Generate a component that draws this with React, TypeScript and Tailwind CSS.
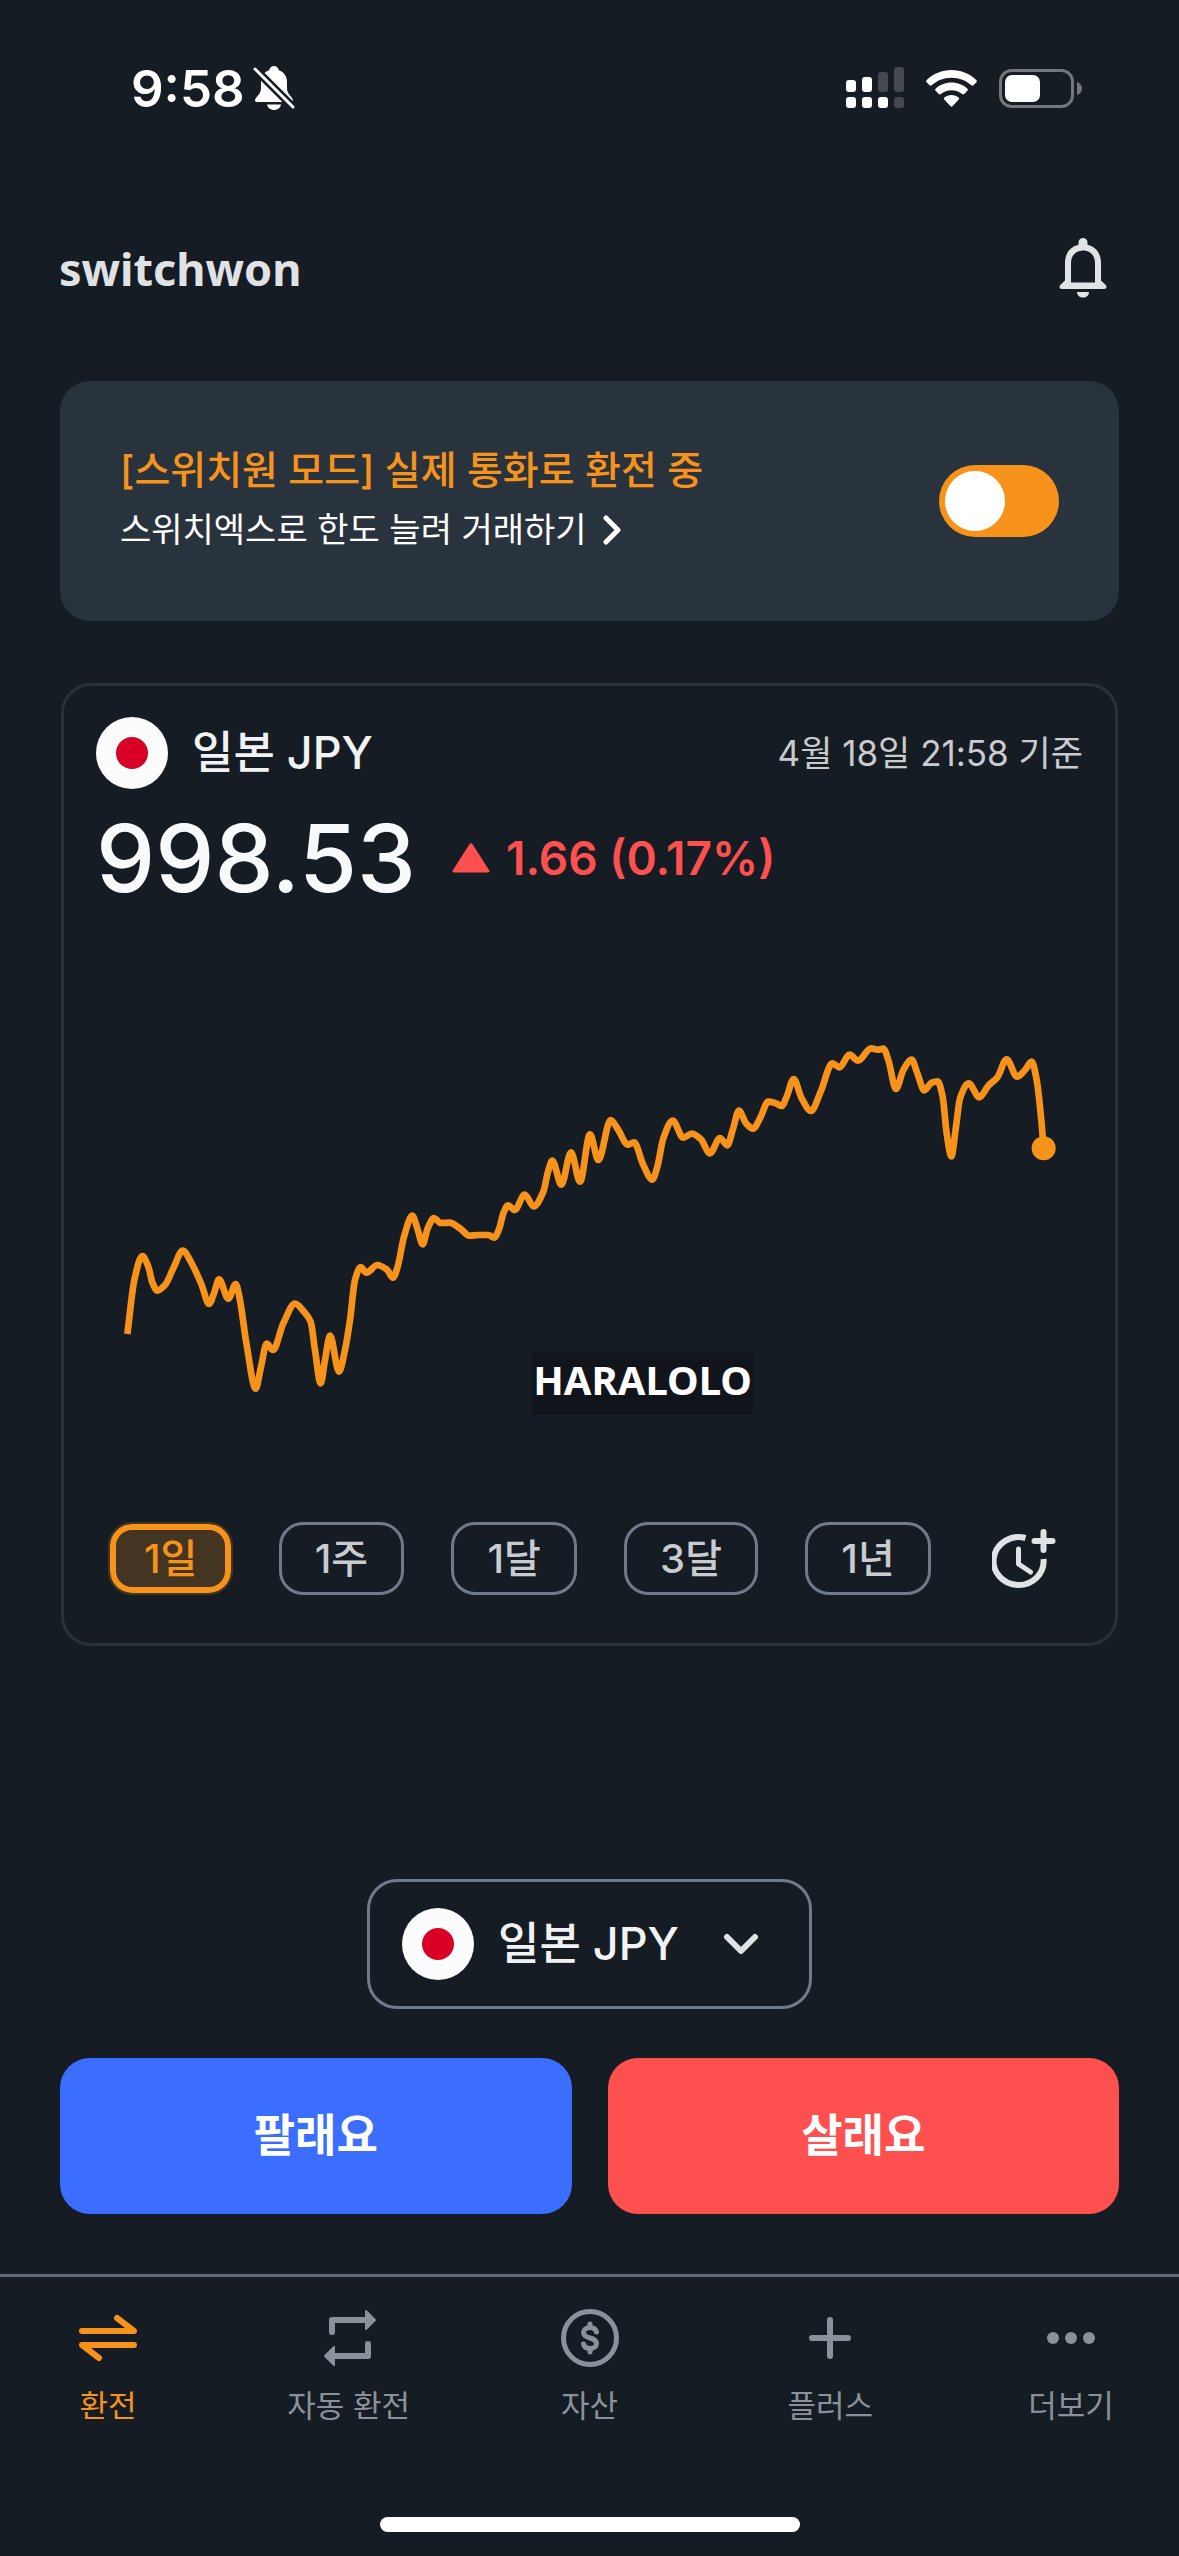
import { useState } from "react";
import type { ReactNode } from "react";

// Rate samples of the day, in chart units (three per pixel).
const SAMPLES: [number, number][] = [
  [82, 912], [104, 745], [127, 678], [145, 710], [157, 757], [172, 782], [195, 765], [222, 710], [248, 662],
  [275, 700], [305, 765], [327, 822], [342, 790], [357, 748], [385, 806], [407, 762], [418, 800], [440, 945],
  [467, 1076], [483, 1010], [500, 941], [519, 960], [550, 880], [585, 821], [612, 845], [632, 875], [645, 960],
  [662, 1060], [675, 990], [690, 917], [717, 1025], [735, 960], [750, 870], [765, 750], [782, 711], [799, 728],
  [832, 705], [860, 718], [879, 743], [893, 710], [912, 620], [937, 557], [952, 595], [968, 643], [983, 595],
  [1002, 564], [1022, 579], [1048, 578], [1080, 595], [1108, 617], [1135, 615], [1165, 615], [1182, 623],
  [1198, 595], [1210, 550], [1224, 526], [1244, 540], [1274, 494], [1301, 529], [1330, 485], [1344, 425],
  [1357, 392], [1384, 464], [1413, 367], [1440, 455], [1470, 313], [1495, 390], [1532, 270], [1555, 300],
  [1583, 344], [1602, 337], [1630, 405], [1657, 449], [1672, 410], [1690, 325], [1718, 272], [1750, 323],
  [1775, 311], [1802, 327], [1830, 370], [1860, 324], [1882, 346], [1898, 300], [1917, 242], [1938, 280],
  [1959, 296], [1980, 265], [2005, 215], [2028, 220], [2045, 228], [2060, 200], [2081, 147], [2105, 205],
  [2133, 243], [2162, 185], [2197, 100], [2218, 112], [2249, 74], [2274, 92], [2313, 55], [2333, 59],
  [2350, 56], [2365, 90], [2388, 177], [2410, 120], [2435, 89], [2452, 130], [2473, 181], [2495, 158],
  [2513, 154], [2528, 200], [2540, 310], [2554, 379], [2568, 290], [2580, 205], [2606, 160], [2638, 202],
  [2665, 167], [2692, 142], [2720, 88], [2751, 140], [2775, 120], [2795, 95], [2810, 150], [2822, 250],
  [2831, 355],
];

// Monotone cubic interpolation, so peaks and valleys stay round without overshoot.
function smoothPath(p: [number, number][]) {
  const n = p.length;
  const slope = p.slice(1).map((q, i) => (q[1] - p[i][1]) / (q[0] - p[i][0]));
  const tangent = p.map((_, i) => {
    if (i === 0) return slope[0];
    if (i === n - 1) return slope[n - 2];
    const a = slope[i - 1];
    const b = slope[i];
    return a * b <= 0 ? 0 : (2 * a * b) / (a + b);
  });
  let d = `M${p[0][0]} ${p[0][1]}`;
  for (let i = 0; i < n - 1; i++) {
    const h = (p[i + 1][0] - p[i][0]) / 3;
    d += `C${p[i][0] + h} ${p[i][1] + tangent[i] * h} ${p[i + 1][0] - h} ${p[i + 1][1] - tangent[i + 1] * h} ${p[i + 1][0]} ${p[i + 1][1]}`;
  }
  return d;
}

function StatusBar() {
  return (
    <div className="flex h-[176px] items-center justify-between pl-[131px] pr-[97px] text-white">
      <div className="flex items-center gap-2">
        <span className="text-[51px] font-semibold leading-none">9:58</span>
        <svg width="42" height="44" viewBox="0 0 42 44" aria-label="무음">
          <path d="M21 0c2.500 0 4.500 1.800 4.800 4.200C31 6 34 10.500 34 16v6c0 3.500 1.200 5.500 3.200 7.700C38.700 31.400 40 33 40 34.600 40 36 39 36 37.500 36h-33C3 36 2 36 2 34.600c0-1.600 1.300-3.200 2.800-4.900C6.800 27.500 8 25.500 8 22v-6C8 10.500 11 6 16.200 4.200 16.500 1.800 18.500 0 21 0z" fill="#fff" />
          <path d="M14 38.500h14c-.6 3.200-3.500 5.500-7 5.500s-6.400-2.300-7-5.500z" fill="#fff" />
          <path d="M0 1l42 42" stroke="#161c23" strokeWidth="8" />
          <path d="M2 3l38 38" stroke="#fff" strokeWidth="3" strokeLinecap="round" />
        </svg>
      </div>
      <div className="flex items-center gap-[22px]">
        <svg width="58" height="42" viewBox="0 0 58 42" aria-label="신호">
          <g fill="#fff">
            <rect x="0" y="13" width="10" height="12" rx="3" />
            <rect x="16" y="10" width="10" height="15" rx="3" />
            <rect x="0" y="30" width="10" height="11" rx="3" />
            <rect x="16" y="30" width="10" height="11" rx="3" />
            <rect x="32" y="30" width="10" height="11" rx="3" />
          </g>
          <g fill="#45484f">
            <rect x="32" y="5" width="10" height="20" rx="3" />
            <rect x="48" y="0" width="10" height="25" rx="3" />
            <rect x="48" y="30" width="10" height="11" rx="3" />
          </g>
        </svg>
        <svg width="51" height="37" viewBox="0 0 51 37" fill="#fff" aria-label="와이파이">
          <path d="M25.500 0C35 0 43.800 3.700 50.300 10c.7.700.7 1.500.1 2.200l-3 3.100c-.6.600-1.400.6-2 0C40.200 10.500 33.200 7.700 25.500 7.700S10.800 10.500 5.600 15.300c-.6.600-1.400.6-2 0l-3-3.100C0 11.500 0 10.700.7 10 7.200 3.700 16 0 25.500 0z" />
          <path d="M25.500 12.500c6.100 0 11.700 2.300 15.900 6.200.7.600.7 1.500 0 2.100l-3.200 3.200c-.6.600-1.300.6-2 .1-2.900-2.500-6.600-3.900-10.700-3.900s-7.800 1.400-10.700 3.900c-.7.500-1.400.5-2-.1l-3.200-3.200c-.7-.6-.7-1.500 0-2.100 4.200-3.900 9.800-6.200 15.900-6.200z" />
          <path d="M25.500 25c2.700 0 5.200.9 7.100 2.500.7.600.7 1.400.1 2l-6.200 6.800c-.6.600-1.400.6-2 0l-6.200-6.800c-.6-.6-.6-1.400.1-2 1.900-1.600 4.400-2.500 7.100-2.500z" />
        </svg>
        <svg width="83" height="39" viewBox="0 0 83 39" aria-label="배터리">
          <rect x="1.500" y="1.500" width="72" height="36" rx="11" fill="none" stroke="#73777b" strokeWidth="3" />
          <rect x="6" y="6" width="35" height="27" rx="7" fill="#fff" />
          <path d="M78 13c3 1.200 5 3.600 5 6.500s-2 5.300-5 6.500z" fill="#73777b" />
        </svg>
      </div>
    </div>
  );
}

function Flag() {
  return (
    <span className="flex size-[72px] items-center justify-center rounded-full bg-[#fcfcfc]">
      <span className="size-8 rounded-full bg-[#d80027]" />
    </span>
  );
}

const PERIODS = ["1일", "1주", "1달", "3달", "1년"];

const chipIdle = "h-[73px] rounded-[24px] border-[3px] border-[#717a88] px-[33px] text-[40px] font-medium leading-none text-[#c8cbcf]";
const chipActive =
  "h-[69px] rounded-[22px] border-[6px] border-[#f7931a] bg-[#443523] px-[28px] text-[40px] font-medium leading-none text-[#f7931a] outline-2 outline-[#443523]";

function RateCard() {
  const [period, setPeriod] = useState("1일");
  return (
    <section className="mx-[61px] mt-[62px] rounded-[30px] border-[3px] border-[#28323b] px-8 pb-12">
      <div className="flex items-center justify-between pt-[31px]">
        <div className="flex items-center gap-6">
          <Flag />
          <h2 className="text-[45px] font-medium leading-[72px] text-[#f1f2f4]">일본 JPY</h2>
        </div>
        <p className="text-[35px] leading-[72px] text-[#c8cbcf]">4월 18일 21:58 기준</p>
      </div>
      <div className="flex items-center gap-9 pt-[14px]">
        <p className="text-[94px] font-medium leading-[110px] text-[#f8f9fb]">998.53</p>
        <p className="flex items-center gap-4 text-[46px] font-semibold leading-[110px] text-[#ff5050]">
          <svg width="38" height="30" viewBox="0 0 38 30" fill="currentColor" aria-label="상승">
            <path d="M17.600 1c.7-1.100 2.100-1.100 2.800 0l16.900 26.600c.6 1-.1 1.900-1.300 1.900H2c-1.200 0-1.900-.9-1.300-1.900z" />
          </svg>
          1.66 (0.17%)
        </p>
      </div>
      <div className="relative mt-[117px]">
        <svg className="block w-full" viewBox="-12 0 2961 1197" aria-label="환율 그래프">
          <path d={smoothPath(SAMPLES)} fill="none" stroke="#f7931a" strokeWidth="20" strokeLinejoin="round" />
          <circle cx="2831" cy="355" r="36" fill="#f7931a" />
        </svg>
        <span className="absolute left-[44%] top-[323px] ml-0.5 bg-[#12141b] px-px pb-[7px] font-['Noto_Sans'] text-[40px] font-bold leading-[54px] text-white">
          HARALOLO
        </span>
      </div>
      <div className="mt-[93px] flex items-center justify-between pl-[14px] pr-[27px]">
        {PERIODS.map((p) => (
          <button key={p} type="button" aria-pressed={p === period} onClick={() => setPeriod(p)} className={p === period ? chipActive : chipIdle}>
            {p}
          </button>
        ))}
        <button type="button" aria-label="기간 추가" className="flex w-[78px] justify-end">
          <svg width="64" height="60" viewBox="0 0 64 60" fill="none" stroke="#e0e3e5" strokeLinecap="round">
            <path d="M33.500 9A25 24 0 1 0 51.500 30" strokeWidth="6" strokeLinecap="butt" />
            <path d="M26.500 20v15l12 8" strokeWidth="5" strokeLinejoin="round" />
            <path d="M51.500 3v18M42.500 12h18" strokeWidth="6" />
          </svg>
        </button>
      </div>
    </section>
  );
}

function NavItem({ label, active, children }: { label: string; active?: boolean; children: ReactNode }) {
  return (
    <a
      href="#"
      aria-current={active ? "page" : undefined}
      className={active ? "flex w-[124px] flex-col items-center text-[#f7931a]" : "flex w-[124px] flex-col items-center text-[#8a919b]"}
    >
      <svg width="60" height="60" viewBox="0 0 60 60" fill="none" stroke="currentColor" strokeWidth="6" strokeLinecap="round" strokeLinejoin="round">
        {children}
      </svg>
      <span className="mt-[14px] whitespace-nowrap text-[31px] leading-[48px]">{label}</span>
    </a>
  );
}

export default function App() {
  const [live, setLive] = useState(true);
  return (
    <div className="flex min-h-screen flex-col bg-[#161c23] font-[Inter,'Noto_Sans_CJK_KR',sans-serif]">
      <StatusBar />
      <header className="flex h-[184px] items-center justify-between pl-[59px] pr-[72px]">
        <h1 className="font-['Noto_Sans'] text-[45px] font-bold leading-none text-[#e0e3e5]">switchwon</h1>
        <button type="button" aria-label="알림">
          <svg width="48" height="60" viewBox="0 0 48 60" fill="#e0e3e5">
            <path fillRule="evenodd" d="M24 0c2.600 0 4.500 2 4.500 4.500v2.200C37 8.700 42 15.500 42 25v17.500l4 3.700c1 1 1.500 1.800 1.500 2.800 0 1.200-1 2-2.500 2H3c-1.500 0-2.500-.8-2.500-2 0-1 .5-1.800 1.500-2.800l4-3.700V25C6 15.500 11 8.700 19.500 6.700V4.500C19.500 2 21.400 0 24 0zm0 12.500c-7.500 0-12 5.500-12 12.500v19.500h24V25c0-7-4.500-12.500-12-12.500z" />
            <path d="M18 54h12c0 3.500-2.600 5.500-6 5.500s-6-2-6-5.500z" />
          </svg>
        </button>
      </header>

      <section className="mx-[60px] mt-[21px] flex h-[240px] items-center justify-between rounded-[30px] bg-[#29333d] px-[60px]">
        <div className="pb-[3px]">
          <p className="text-[39px] font-medium leading-[60px] text-[#f7931a]">[스위치원 모드] 실제 통화로 환전 중</p>
          <a href="#" className="flex items-center gap-4 text-[34px] leading-[60px] text-white">
            스위치엑스로 한도 늘려 거래하기
            <svg width="18" height="30" viewBox="0 0 18 30" fill="none" stroke="currentColor" strokeWidth="5" strokeLinecap="round" strokeLinejoin="round" aria-hidden="true">
              <path d="M3 3l12 12L3 27" />
            </svg>
          </a>
        </div>
        <label className="flex h-[72px] w-[120px] cursor-pointer items-center rounded-full bg-[#f7931a] p-[6px]">
          <input type="checkbox" role="switch" aria-label="스위치원 모드" className="sr-only" checked={live} onChange={() => setLive(!live)} />
          <span className="size-[60px] rounded-full bg-white" />
        </label>
      </section>

      <RateCard />

      <button type="button" aria-haspopup="listbox" className="mx-auto mt-[233px] flex h-[130px] items-center rounded-[30px] border-[3px] border-[#717a88] pl-8 pr-[50px]">
        <Flag />
        <span className="ml-6 text-[45px] font-medium leading-[72px] text-[#f1f2f4]">일본 JPY</span>
        <svg className="ml-11" width="36" height="22" viewBox="0 0 36 22" fill="none" stroke="#e0e3e5" strokeWidth="6" strokeLinecap="round" strokeLinejoin="round" aria-hidden="true">
          <path d="M4 4l14 14L32 4" />
        </svg>
      </button>

      <div className="mx-[60px] mt-[49px] grid grid-cols-2 gap-9 text-[45px] font-semibold text-white">
        <button type="button" className="h-[156px] rounded-[30px] bg-[#3b6dff]">팔래요</button>
        <button type="button" className="h-[156px] rounded-[30px] bg-[#ff5050]">살래요</button>
      </div>

      <nav className="mt-[60px] flex justify-between border-t-[3px] border-[#606c78] px-[46px] pt-[31px]">
        <NavItem label="환전" active>
          <path d="M4 23h52L39 10" />
          <path d="M56 37H4l17 13" />
        </NavItem>
        <NavItem label="자동 환전">
          <path d="M13 24V12h32" />
          <path d="M49 36v12H15" />
          <path d="M47 3l9 9-9 9zM15 39l-9 9 9 9z" fill="currentColor" strokeWidth="2" />
        </NavItem>
        <NavItem label="자산">
          <circle cx="30" cy="30" r="26.500" strokeWidth="5" />
          <path d="M36.500 24c-.8-3-3.400-4.500-6.500-4.500-3.800 0-6.500 2-6.500 5s2.600 4.400 6.500 5.500 6.500 2.500 6.500 5.500-2.700 5-6.500 5c-3.100 0-5.700-1.500-6.500-4.500M30 16v3M30 41v3" strokeWidth="5" />
        </NavItem>
        <NavItem label="플러스">
          <path d="M30 12v36M12 30h36" />
        </NavItem>
        <NavItem label="더보기">
          <g fill="currentColor" stroke="none">
            <circle cx="12" cy="30" r="6" />
            <circle cx="30" cy="30" r="6" />
            <circle cx="48" cy="30" r="6" />
          </g>
        </NavItem>
      </nav>
      <div className="mx-auto mb-6 mt-auto h-[15px] w-[420px] rounded-full bg-white" />
    </div>
  );
}
